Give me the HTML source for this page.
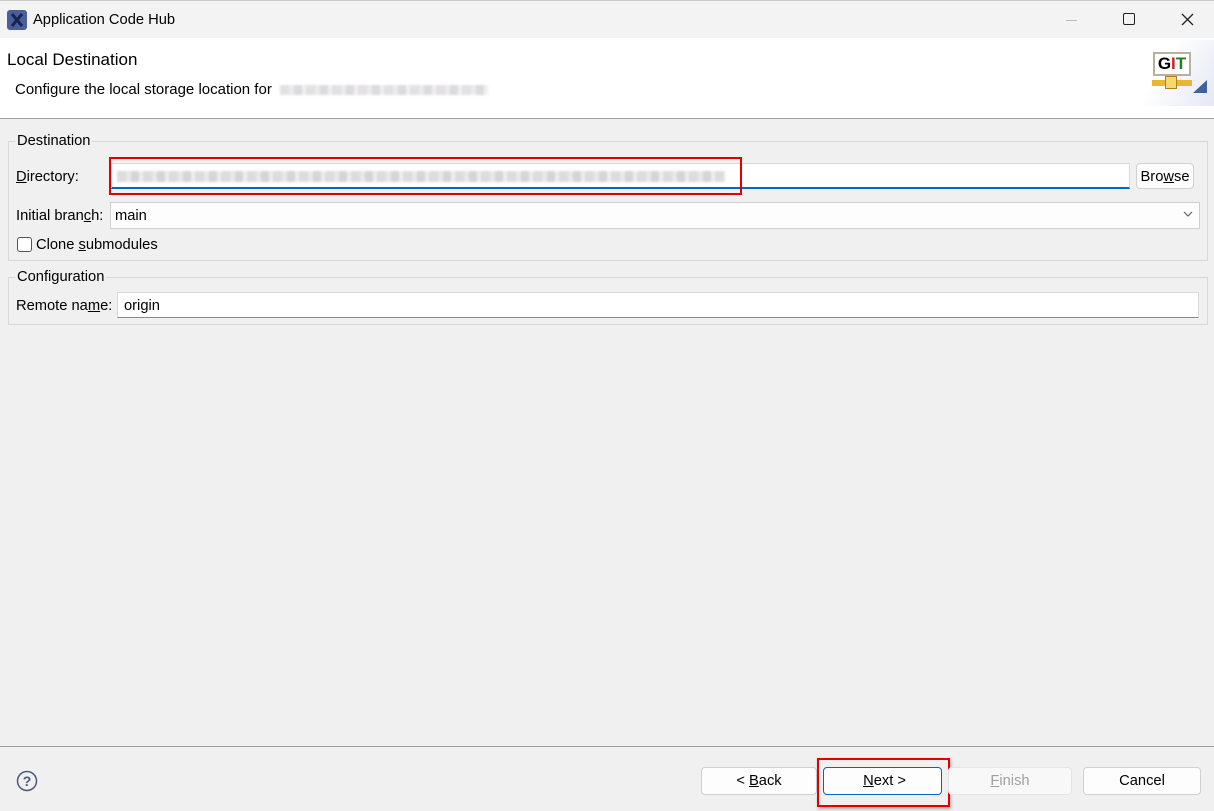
<!DOCTYPE html>
<html><head><meta charset="utf-8"><style>
*{box-sizing:border-box;margin:0;padding:0}
body{width:1214px;height:811px;background:#f0f0f0;font-family:"Liberation Sans",sans-serif;font-size:14.7px;color:#000;position:relative;overflow:hidden}
.a{position:absolute}
.title{left:0;top:0;width:1214px;height:38px;background:#f3f3f3;border-top:1px solid #ccc}
.hdr{left:0;top:38px;width:1214px;height:81px;background:#fff;border-bottom:1px solid #a0a0a0}
.grp{border:1px solid #d8d8d8}
.lbl{background:#f0f0f0;padding:0 2px}
.inp{background:#fff;border:1px solid #d9d9d9;border-bottom:1px solid #8a8a8a}
.btn{background:#fdfdfd;border:1px solid #d0d0d0;border-radius:4px;text-align:center;line-height:27px}
u{text-decoration:underline}
.blur{background:repeating-linear-gradient(90deg,#cfcdcf 0 9px,#e0dee0 9px 14px,#c4c2c6 14px 22px,#e8e6e8 22px 26px);filter:blur(1px)}
</style></head><body>
<div class="a title"></div>
<div class="a" style="left:7px;top:10px;width:20px;height:20px;background:#4a5e9e;border-radius:3px"><svg width="20" height="20"><path d="M5 4L15 16M15 4L5 16" stroke="#1a2450" stroke-width="3"/></svg></div>
<div class="a" style="left:33px;top:12px;font-size:14.7px">Application Code Hub</div>
<div class="a" style="left:1066px;top:20px;width:11px;height:1px;background:#bbb"></div>
<div class="a" style="left:1123px;top:13px;width:12px;height:12px;border:1.5px solid #222;border-radius:2px"></div>
<svg class="a" style="left:1181px;top:13px" width="13" height="13"><path d="M1 1L12 12M12 1L1 12" stroke="#222" stroke-width="1.3"/></svg>
<div class="a hdr"></div>
<div class="a" style="left:7px;top:50px;font-size:17px">Local Destination</div>
<div class="a" style="left:15px;top:81px;font-size:15px">Configure the local storage location for</div>
<div class="a blur" style="left:280px;top:85px;width:208px;height:10px;opacity:.6"></div>
<div class="a" style="left:1144px;top:40px;width:70px;height:66px;background:linear-gradient(120deg,#fff 30%,#e4e8f4)"></div>
<div class="a" style="left:1153px;top:52px;width:38px;height:24px;background:#fff;border:2px solid #b8b0a0;font:bold 17px 'Liberation Sans';text-align:center;line-height:20px"><span>G</span><span style="color:#d02020">I</span><span style="color:#208020">T</span></div>
<div class="a" style="left:1152px;top:80px;width:40px;height:6px;background:#e8b830"></div>
<div class="a" style="left:1165px;top:76px;width:12px;height:13px;background:#f4d870;border:1px solid #b08020"></div>
<svg class="a" style="left:1193px;top:80px" width="14" height="13"><path d="M14 0L14 13L0 13Z" fill="#4060a0"/></svg>

<div class="a grp" style="left:8px;top:141px;width:1200px;height:120px"></div>
<div class="a lbl" style="left:15px;top:133px">Destination</div>
<div class="a" style="left:16px;top:169px"><u>D</u>irectory:</div>
<div class="a inp" style="left:111px;top:163px;width:1019px;height:26px;border-bottom:2px solid #0067c0"></div>
<div class="a blur" style="left:117px;top:171px;width:608px;height:11px;opacity:.7"></div>
<div class="a" style="left:109px;top:157px;width:633px;height:38px;border:2px solid #e00000"></div>
<div class="a btn" style="left:1136px;top:163px;width:58px;height:26px;line-height:26px">Bro<u>w</u>se</div>
<div class="a" style="left:16px;top:208px">Initial bran<u>c</u>h:</div>
<div class="a inp" style="left:110px;top:202px;width:1090px;height:27px;border-color:#d0d0d0;background:#fdfdfd"></div>
<div class="a" style="left:115px;top:208px">main</div>
<svg class="a" style="left:1183px;top:211px" width="10" height="6"><path d="M1 1L5 5L9 1" stroke="#555" fill="none"/></svg>
<div class="a" style="left:17px;top:237px;width:15px;height:15px;border:1px solid #555;border-radius:3px;background:#fff"></div>
<div class="a" style="left:36px;top:237px">Clone <u>s</u>ubmodules</div>

<div class="a grp" style="left:8px;top:277px;width:1200px;height:48px"></div>
<div class="a lbl" style="left:15px;top:269px">Configuration</div>
<div class="a" style="left:16px;top:298px">Remote na<u>m</u>e:</div>
<div class="a inp" style="left:117px;top:292px;width:1082px;height:26px"></div>
<div class="a" style="left:124px;top:298px">origin</div>

<div class="a" style="left:0;top:746px;width:1214px;height:1px;background:#a0a0a0"></div>
<svg class="a" style="left:16px;top:770px" width="22" height="22"><circle cx="11" cy="11" r="9.5" stroke="#4a5a7a" stroke-width="1.5" fill="none"/><text x="11" y="16" font-family="Liberation Sans" font-weight="bold" font-size="14" fill="#4a5a7a" text-anchor="middle">?</text></svg>
<div class="a btn" style="left:701px;top:767px;width:116px;height:28px">&lt; <u>B</u>ack</div>
<div class="a btn" style="left:823px;top:767px;width:119px;height:28px;border-color:#0067c0">&nbsp;<u>N</u>ext &gt;</div>
<div class="a" style="left:817px;top:758px;width:133px;height:49px;border:2px solid #e00000;box-shadow:1px 2px 3px rgba(0,0,0,.3)"></div>
<div class="a btn" style="left:948px;top:767px;width:124px;height:28px;color:#a0a0a0;border-color:#e4e4e4;background:#f8f8f8"><u>F</u>inish</div>
<div class="a btn" style="left:1083px;top:767px;width:118px;height:28px">Cancel</div>
</body></html>
